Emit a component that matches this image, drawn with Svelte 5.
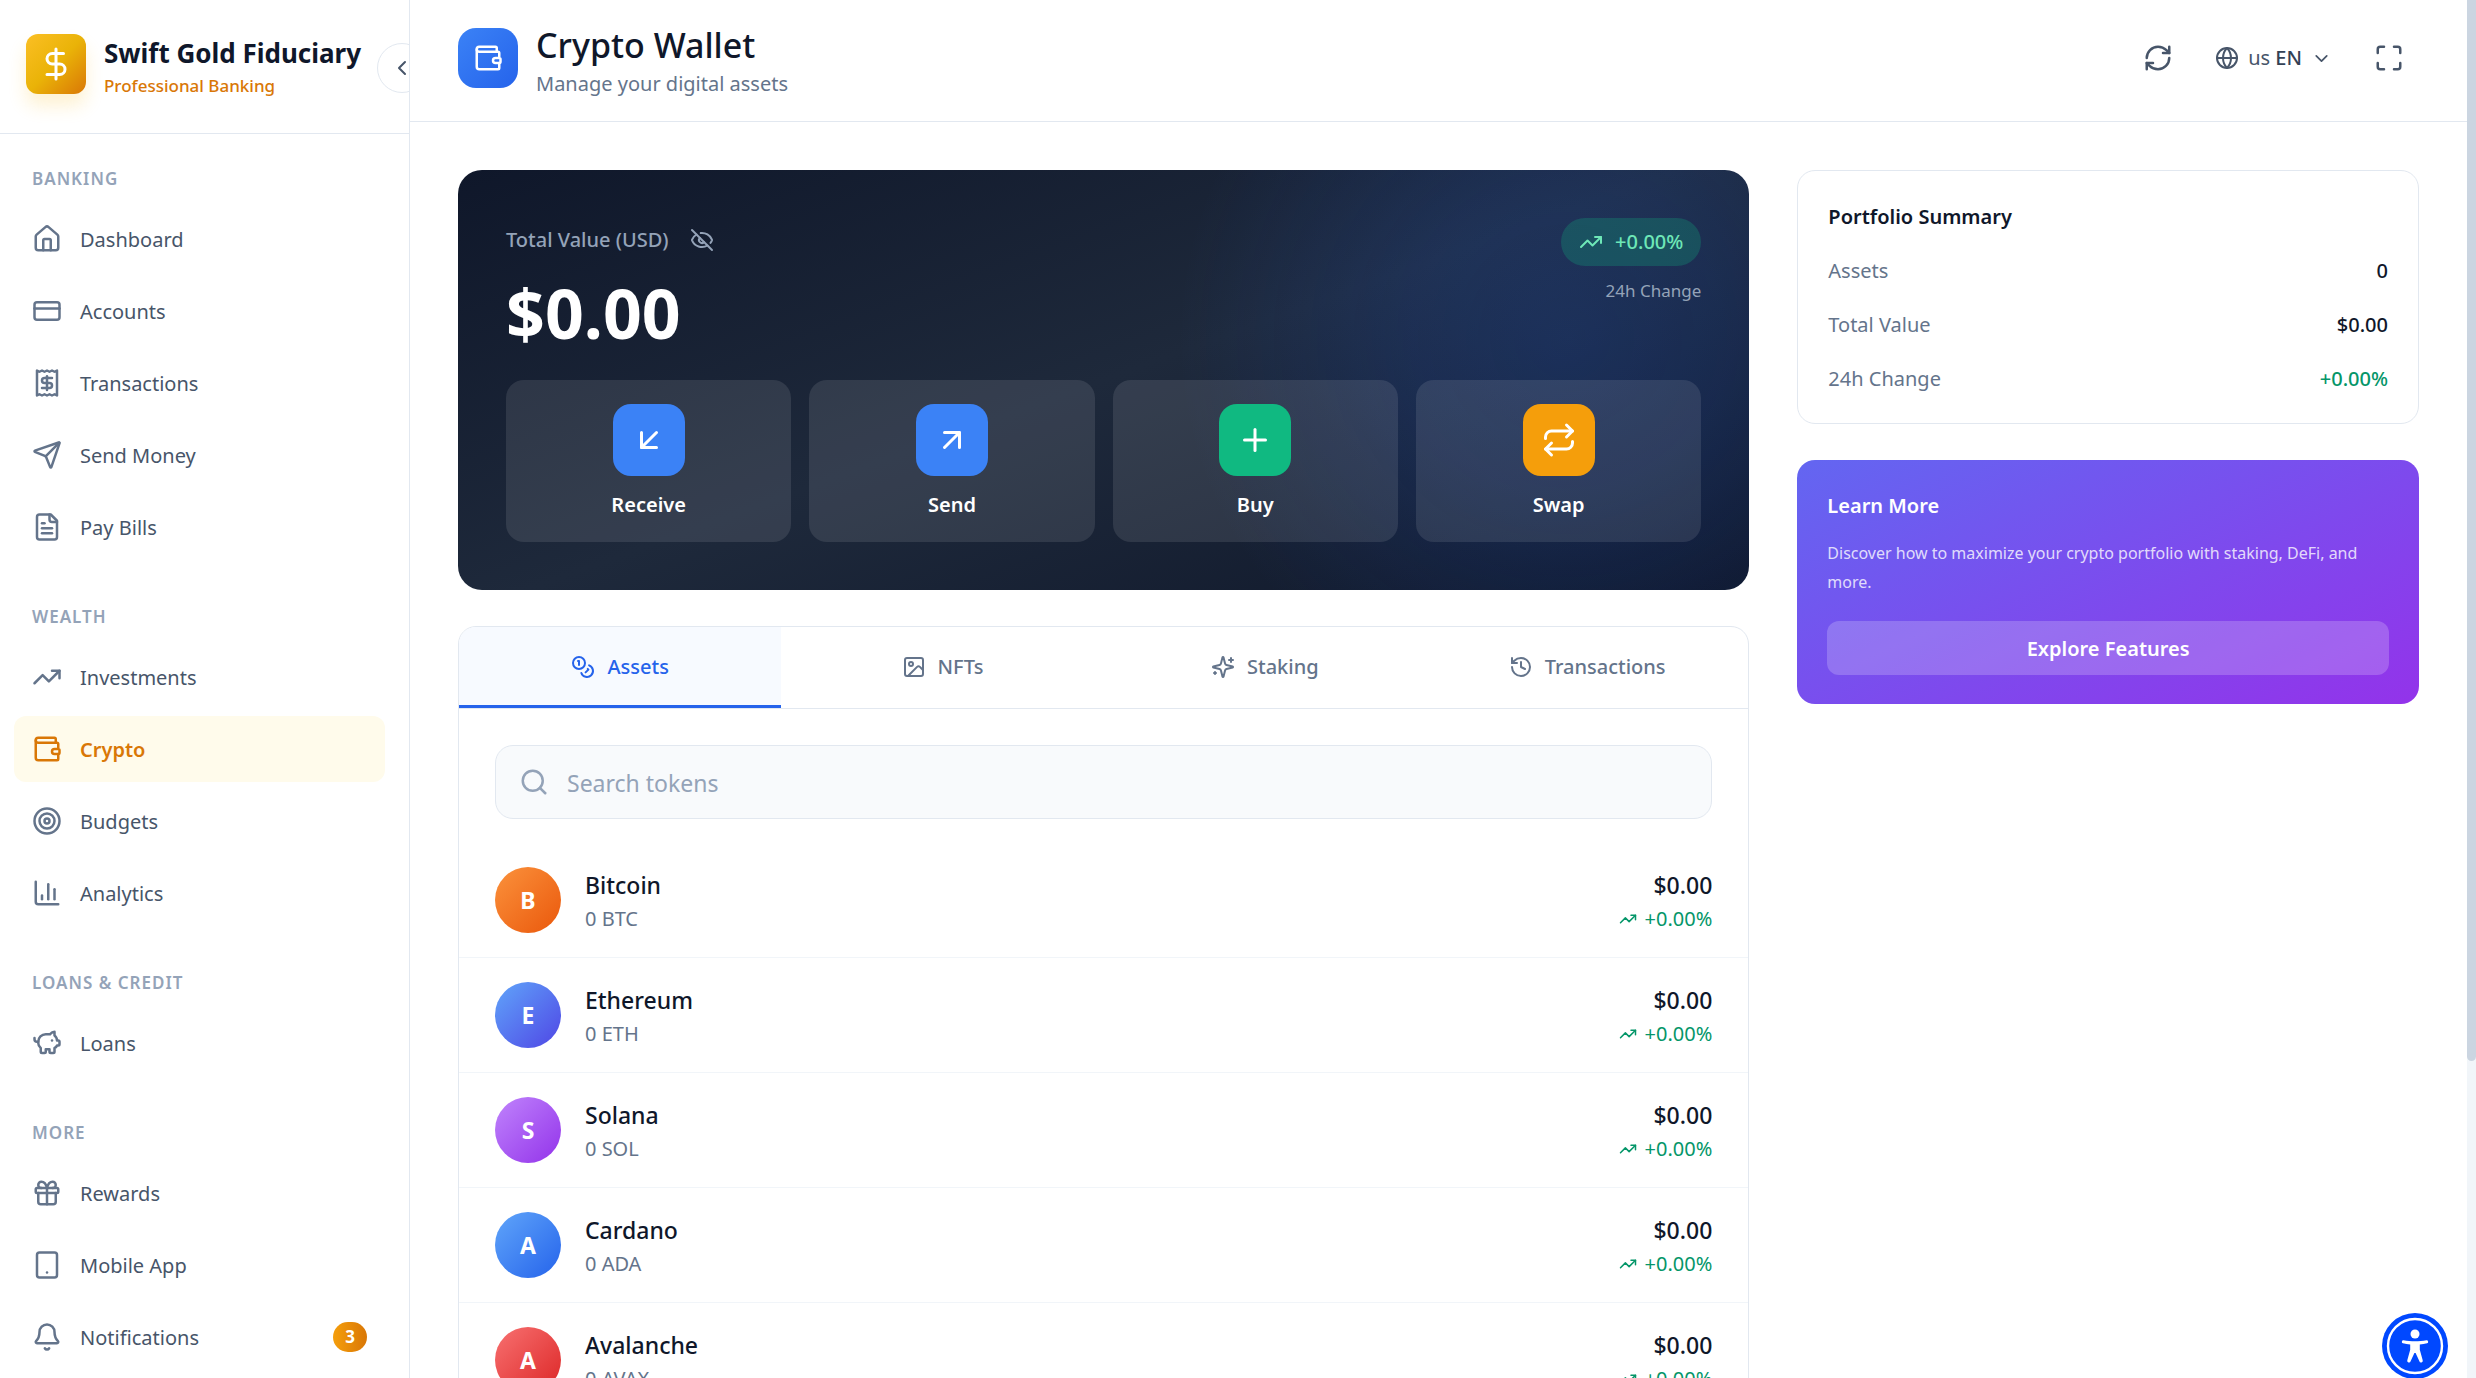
<script lang="ts">
    type Shape = { name: string; size?: number; stroke?: number };

    // 24x24 stroke icons
    const icons: Record<string, string[]> = {
        dollar: ["M12 2v20", "M17 5H9.5a3.5 3.5 0 0 0 0 7h5a3.5 3.5 0 0 1 0 7H6"],
        chevronLeft: ["m15 18-6-6 6-6"],
        chevronDown: ["m6 9 6 6 6-6"],
        house: [
            "M15 21v-8a1 1 0 0 0-1-1h-4a1 1 0 0 0-1 1v8",
            "M3 10a2 2 0 0 1 .709-1.528l7-5.999a2 2 0 0 1 2.582 0l7 5.999A2 2 0 0 1 21 10v9a2 2 0 0 1-2 2H5a2 2 0 0 1-2-2z"
        ],
        card: ["M4 5h16a2 2 0 0 1 2 2v10a2 2 0 0 1-2 2H4a2 2 0 0 1-2-2V7a2 2 0 0 1 2-2z", "M2 10h20"],
        receipt: [
            "M4 2v20l2-1 2 1 2-1 2 1 2-1 2 1 2-1 2 1V2l-2 1-2-1-2 1-2-1-2 1-2-1-2 1Z",
            "M16 8h-6a2 2 0 1 0 0 4h4a2 2 0 1 1 0 4H8",
            "M12 17.5v-11"
        ],
        send: [
            "M14.536 21.686a.5.5 0 0 0 .937-.024l6.5-19a.496.496 0 0 0-.635-.635l-19 6.5a.5.5 0 0 0-.024.937l7.93 3.18a2 2 0 0 1 1.112 1.11z",
            "m21.854 2.147-10.94 10.939"
        ],
        file: [
            "M15 2H6a2 2 0 0 0-2 2v16a2 2 0 0 0 2 2h12a2 2 0 0 0 2-2V7Z",
            "M14 2v4a2 2 0 0 0 2 2h4",
            "M10 9H8",
            "M16 13H8",
            "M16 17H8"
        ],
        trend: ["m22 7-8.5 8.5-5-5L2 17", "M16 7h6v6"],
        wallet: [
            "M19 7V4a1 1 0 0 0-1-1H5a2 2 0 0 0 0 4h15a1 1 0 0 1 1 1v4h-3a2 2 0 0 0 0 4h3a1 1 0 0 0 1-1v-2a1 1 0 0 0-1-1",
            "M3 5v14a2 2 0 0 0 2 2h15a1 1 0 0 0 1-1v-4"
        ],
        target: [
            "M2 12a10 10 0 1 0 20 0a10 10 0 1 0-20 0",
            "M6 12a6 6 0 1 0 12 0a6 6 0 1 0-12 0",
            "M10 12a2 2 0 1 0 4 0a2 2 0 1 0-4 0"
        ],
        chart: ["M3 3v16a2 2 0 0 0 2 2h16", "M18 17V9", "M13 17V5", "M8 17v-3"],
        piggy: [
            "M11 17h3v2a1 1 0 0 0 1 1h2a1 1 0 0 0 1-1v-3a3.16 3.16 0 0 0 2-2h1a1 1 0 0 0 1-1v-2a1 1 0 0 0-1-1h-1a5 5 0 0 0-2-4V3a4 4 0 0 0-3.2 1.6l-.3.4H11a6 6 0 0 0-6 6v1a5 5 0 0 0 2 4v3a1 1 0 0 0 1 1h2a1 1 0 0 0 1-1z",
            "M16 10h.01",
            "M2 8v1a2 2 0 0 0 2 2h1"
        ],
        gift: [
            "M4 8h16a1 1 0 0 1 1 1v2a1 1 0 0 1-1 1H4a1 1 0 0 1-1-1V9a1 1 0 0 1 1-1z",
            "M12 8v13",
            "M19 12v7a2 2 0 0 1-2 2H7a2 2 0 0 1-2-2v-7",
            "M7.5 8a2.5 2.5 0 0 1 0-5A4.8 8 0 0 1 12 8a4.8 8 0 0 1 4.5-5 2.5 2.5 0 0 1 0 5"
        ],
        tablet: ["M6 2h12a2 2 0 0 1 2 2v16a2 2 0 0 1-2 2H6a2 2 0 0 1-2-2V4a2 2 0 0 1 2-2z", "M12 18h.01"],
        bell: [
            "M10.268 21a2 2 0 0 0 3.464 0",
            "M3.262 15.326A1 1 0 0 0 4 17h16a1 1 0 0 0 .74-1.673C19.41 13.956 18 12.499 18 8A6 6 0 0 0 6 8c0 4.499-1.411 5.956-2.738 7.326"
        ],
        refresh: [
            "M3 12a9 9 0 0 1 9-9 9.75 9.75 0 0 1 6.74 2.74L21 8",
            "M21 3v5h-5",
            "M21 12a9 9 0 0 1-9 9 9.75 9.75 0 0 1-6.74-2.74L3 16",
            "M8 16H3v5"
        ],
        globe: [
            "M2 12a10 10 0 1 0 20 0a10 10 0 1 0-20 0",
            "M12 2a14.5 14.5 0 0 0 0 20 14.5 14.5 0 0 0 0-20",
            "M2 12h20"
        ],
        maximize: [
            "M8 3H5a2 2 0 0 0-2 2v3",
            "M21 8V5a2 2 0 0 0-2-2h-3",
            "M3 16v3a2 2 0 0 0 2 2h3",
            "M16 21h3a2 2 0 0 0 2-2v-3"
        ],
        eyeOff: [
            "M10.733 5.076a10.744 10.744 0 0 1 11.205 6.575 1 1 0 0 1 0 .696 10.747 10.747 0 0 1-1.444 2.49",
            "M14.084 14.158a3 3 0 0 1-4.242-4.242",
            "M17.479 17.499a10.75 10.75 0 0 1-15.417-5.151 1 1 0 0 1 0-.696 10.75 10.75 0 0 1 4.446-5.143",
            "m2 2 20 20"
        ],
        downLeft: ["M17 7 7 17", "M17 17H7V7"],
        upRight: ["M7 7h10v10", "M7 17 17 7"],
        plus: ["M5 12h14", "M12 5v14"],
        repeat: ["m17 2 4 4-4 4", "M3 11v-1a4 4 0 0 1 4-4h14", "m7 22-4-4 4-4", "M21 13v1a4 4 0 0 1-4 4H3"],
        coins: [
            "M2 8a6 6 0 1 0 12 0a6 6 0 1 0-12 0",
            "M18.09 10.37A6 6 0 1 1 10.34 18",
            "M7 6h1v4",
            "m16.71 13.88.7.71-2.82 2.82"
        ],
        image: [
            "M5 3h14a2 2 0 0 1 2 2v14a2 2 0 0 1-2 2H5a2 2 0 0 1-2-2V5a2 2 0 0 1 2-2z",
            "M7 9a2 2 0 1 0 4 0a2 2 0 1 0-4 0",
            "m21 15-3.086-3.086a2 2 0 0 0-2.828 0L6 21"
        ],
        sparkles: [
            "M9.937 15.5A2 2 0 0 0 8.5 14.063l-6.135-1.582a.5.5 0 0 1 0-.962L8.5 9.936A2 2 0 0 0 9.937 8.5l1.582-6.135a.5.5 0 0 1 .963 0L14.063 8.5A2 2 0 0 0 15.5 9.937l6.135 1.581a.5.5 0 0 1 0 .964L15.5 14.063a2 2 0 0 0-1.437 1.437l-1.582 6.135a.5.5 0 0 1-.963 0z",
            "M20 3v4",
            "M22 5h-4",
            "M4 17v2",
            "M5 18H3"
        ],
        history: ["M3 12a9 9 0 1 0 9-9 9.75 9.75 0 0 0-6.74 2.74L3 8", "M3 3v5h5", "M12 7v5l4 2"],
        search: ["M3 11a8 8 0 1 0 16 0a8 8 0 1 0-16 0", "m21 21-4.3-4.3"]
    };

    const sections = [
        {
            title: "Banking",
            items: [
                { label: "Dashboard", icon: "house" },
                { label: "Accounts", icon: "card" },
                { label: "Transactions", icon: "receipt" },
                { label: "Send Money", icon: "send" },
                { label: "Pay Bills", icon: "file" }
            ]
        },
        {
            title: "Wealth",
            items: [
                { label: "Investments", icon: "trend" },
                { label: "Crypto", icon: "wallet" },
                { label: "Budgets", icon: "target" },
                { label: "Analytics", icon: "chart" }
            ]
        },
        { title: "Loans & Credit", items: [{ label: "Loans", icon: "piggy" }] },
        {
            title: "More",
            items: [
                { label: "Rewards", icon: "gift" },
                { label: "Mobile App", icon: "tablet" },
                { label: "Notifications", icon: "bell", badge: 3 }
            ]
        }
    ];

    const actions = [
        { label: "Receive", icon: "downLeft", color: "blue" },
        { label: "Send", icon: "upRight", color: "blue" },
        { label: "Buy", icon: "plus", color: "green" },
        { label: "Swap", icon: "repeat", color: "amber" }
    ];

    const tabs = [
        { label: "Assets", icon: "coins" },
        { label: "NFTs", icon: "image" },
        { label: "Staking", icon: "sparkles" },
        { label: "Transactions", icon: "history" }
    ];

    const tokens = [
        { name: "Bitcoin", symbol: "BTC", tone: "orange" },
        { name: "Ethereum", symbol: "ETH", tone: "indigo" },
        { name: "Solana", symbol: "SOL", tone: "purple" },
        { name: "Cardano", symbol: "ADA", tone: "sky" },
        { name: "Avalanche", symbol: "AVAX", tone: "red" }
    ];

    let activePage = $state("Crypto");
    let activeTab = $state("Assets");
    let hidden = $state(false);
    let query = $state("");

    let visibleTokens = $derived(
        tokens.filter((t) => `${t.name} ${t.symbol}`.toLowerCase().includes(query.toLowerCase()))
    );
</script>

{#snippet icon({ name, size = 30, stroke = 2 }: Shape)}
    <svg
        width={size}
        height={size}
        viewBox="0 0 24 24"
        fill="none"
        stroke="currentColor"
        stroke-width={stroke}
        stroke-linecap="round"
        stroke-linejoin="round"
        aria-hidden="true"
    >
        {#each icons[name] as d}
            <path {d} />
        {/each}
    </svg>
{/snippet}

<div class="app">
    <aside class="sidebar">
        <div class="brand">
            <div class="brand-logo">{@render icon({ name: "dollar", size: 36 })}</div>
            <div>
                <div class="brand-name">Swift Gold Fiduciary</div>
                <div class="brand-sub">Professional Banking</div>
            </div>
            <button class="collapse" aria-label="Collapse sidebar">
                {@render icon({ name: "chevronLeft", size: 24 })}
            </button>
        </div>
        <nav>
            {#each sections as section}
                <section>
                    <h2>{section.title}</h2>
                    <ul>
                        {#each section.items as item}
                            <li>
                                <a
                                    href="#{item.icon}"
                                    class="nav-item"
                                    class:active={activePage === item.label}
                                    onclick={() => (activePage = item.label)}
                                >
                                    {@render icon({ name: item.icon })}
                                    <span class="nav-label">{item.label}</span>
                                    {#if item.badge}
                                        <span class="badge">{item.badge}</span>
                                    {/if}
                                </a>
                            </li>
                        {/each}
                    </ul>
                </section>
            {/each}
        </nav>
    </aside>

    <div class="page">
        <header class="topbar">
            <div class="page-icon">{@render icon({ name: "wallet" })}</div>
            <div class="page-title">
                <h1>Crypto Wallet</h1>
                <p>Manage your digital assets</p>
            </div>
            <div class="tools">
                <button class="tool" aria-label="Refresh">{@render icon({ name: "refresh" })}</button>
                <button class="tool lang">
                    {@render icon({ name: "globe", size: 24 })}
                    <span class="lang-name"><span class="flag">us</span> EN</span>
                    {@render icon({ name: "chevronDown", size: 21 })}
                </button>
                <button class="tool" aria-label="Fullscreen">{@render icon({ name: "maximize" })}</button>
            </div>
        </header>

        <main>
            <div class="primary">
                <section class="hero">
                    <div class="hero-top">
                        <div>
                            <div class="hero-label">
                                <span>Total Value (USD)</span>
                                <button aria-label="Toggle balance" onclick={() => (hidden = !hidden)}>
                                    {@render icon({ name: "eyeOff", size: 24 })}
                                </button>
                            </div>
                            <div class="balance">{hidden ? "••••••" : "$0.00"}</div>
                        </div>
                        <div class="hero-change">
                            <span class="pill">{@render icon({ name: "trend", size: 24 })} +0.00%</span>
                            <span class="period">24h Change</span>
                        </div>
                    </div>
                    <div class="actions">
                        {#each actions as action}
                            <button class="action">
                                <span class="action-icon {action.color}">
                                    {@render icon({ name: action.icon, size: 36 })}
                                </span>
                                {action.label}
                            </button>
                        {/each}
                    </div>
                </section>

                <section class="card assets">
                    <div class="tabs" role="tablist">
                        {#each tabs as tab}
                            <button
                                role="tab"
                                class="tab"
                                class:active={activeTab === tab.label}
                                aria-selected={activeTab === tab.label}
                                onclick={() => (activeTab = tab.label)}
                            >
                                {@render icon({ name: tab.icon, size: 24 })}
                                {tab.label}
                            </button>
                        {/each}
                    </div>
                    <label class="search">
                        {@render icon({ name: "search" })}
                        <input type="text" placeholder="Search tokens" aria-label="Search tokens" bind:value={query} />
                    </label>
                    <ul class="tokens">
                        {#each visibleTokens as token}
                            <li class="token">
                                <span class="avatar {token.tone}">{token.symbol[0]}</span>
                                <div>
                                    <div class="token-main">{token.name}</div>
                                    <div class="token-sub">0 {token.symbol}</div>
                                </div>
                                <div class="token-value">
                                    <div class="token-main">$0.00</div>
                                    <div class="token-sub up">{@render icon({ name: "trend", size: 18 })} +0.00%</div>
                                </div>
                            </li>
                        {/each}
                    </ul>
                </section>
            </div>

            <div class="secondary">
                <section class="card summary">
                    <h3>Portfolio Summary</h3>
                    <dl>
                        <div><dt>Assets</dt><dd>0</dd></div>
                        <div><dt>Total Value</dt><dd>$0.00</dd></div>
                        <div><dt>24h Change</dt><dd class="up">+0.00%</dd></div>
                    </dl>
                </section>
                <section class="learn">
                    <h3>Learn More</h3>
                    <p>Discover how to maximize your crypto portfolio with staking, DeFi, and more.</p>
                    <button>Explore Features</button>
                </section>
            </div>
        </main>
    </div>

    <div class="scroll-track"><div class="scroll-thumb"></div></div>

    <button class="a11y" aria-label="Accessibility options">
        <svg width="66" height="66" viewBox="0 0 66 66" aria-hidden="true">
            <circle cx="33" cy="33" r="33" fill="#0048ff" />
            <circle cx="33" cy="33" r="27" fill="none" stroke="#fff" stroke-width="2.4" />
            <circle cx="33" cy="21" r="4.5" fill="#fff" />
            <path
                d="M21.6 27.2c3.6.8 7.4 1.1 11.4 1.1s7.8-.3 11.4-1.1a1.6 1.6 0 0 1 .7 3.1c-2.4.6-4.8 1-7.3 1.2v5.2l2.9 10.5a1.7 1.7 0 0 1-3.3 1.1L33.6 40h-1.2l-3.8 8.3a1.7 1.7 0 0 1-3.3-1.1l2.9-10.5v-5.2c-2.5-.2-4.9-.6-7.3-1.2a1.6 1.6 0 0 1 .7-3.1z"
                fill="#fff"
            />
        </svg>
    </button>
</div>

<style>
    :global(body) {
        margin: 0;
        background: #fff;
        overflow: hidden;
    }
    .app {
        display: flex;
        height: 100vh;
        overflow: hidden;
        font-family: "Segoe UI", "Noto Sans", "Open Sans", sans-serif;
        font-size: 20px;
        line-height: 30px;
        color: #0f172a;
    }
    h1, h2, h3, p, ul, dl, dd {
        margin: 0;
        padding: 0;
    }
    ul {
        list-style: none;
    }
    button {
        font: inherit;
        color: inherit;
        border: none;
        background: none;
        padding: 0;
        cursor: pointer;
    }
    svg {
        flex: none;
        display: block;
    }

    /* sidebar */
    .sidebar {
        flex: none;
        width: 410px;
        box-sizing: border-box;
        border-right: 1px solid #e2e8f0;
        overflow: hidden;
    }
    .brand {
        position: relative;
        display: flex;
        align-items: flex-start;
        gap: 18px;
        height: 134px;
        padding: 34px 26px 0;
        box-sizing: border-box;
        border-bottom: 1px solid #e2e8f0;
        white-space: nowrap;
    }
    .brand-logo {
        flex: none;
        display: grid;
        place-items: center;
        width: 60px;
        height: 60px;
        border-radius: 12px;
        color: #fff;
        background: linear-gradient(135deg, #fbbf24, #eab308 50%, #d97706);
        box-shadow: 0 12px 18px rgba(251, 191, 36, 0.2);
    }
    .brand-name {
        font-size: 26px;
        line-height: 38px;
        font-weight: 700;
    }
    .brand-sub {
        font-size: 17px;
        line-height: 27px;
        font-weight: 500;
        color: #d97706;
    }
    .collapse {
        position: absolute;
        right: -18px;
        top: 43px;
        display: grid;
        place-items: center;
        width: 50px;
        height: 50px;
        border: 1px solid #e2e8f0;
        border-radius: 50%;
        background: #fff;
        color: #475569;
    }
    nav {
        padding: 33px 24px 0 14px;
    }
    section + section {
        margin-top: 45px;
    }
    h2 {
        padding: 0 18px 15px;
        font-size: 17px;
        line-height: 24px;
        font-weight: 600;
        letter-spacing: 1px;
        text-transform: uppercase;
        color: #94a3b8;
    }
    nav ul {
        display: grid;
        gap: 6px;
    }
    .nav-item {
        display: flex;
        align-items: center;
        gap: 18px;
        height: 66px;
        padding: 0 18px;
        border-radius: 12px;
        color: #475569;
        text-decoration: none;
    }
    .nav-item svg {
        color: #64748b;
    }
    .nav-item.active,
    .nav-item.active svg {
        color: #d97706;
    }
    .nav-item.active {
        background: #fffbeb;
        font-weight: 600;
    }
    .nav-label {
        padding-top: 2px;
    }
    .badge {
        margin-left: auto;
        min-width: 34px;
        border-radius: 15px;
        font-size: 17px;
        font-weight: 700;
        text-align: center;
        color: #fff;
        background: linear-gradient(90deg, #f59e0b, #d97706);
    }

    /* top bar */
    .page {
        flex: 1;
        min-width: 0;
    }
    .topbar {
        display: flex;
        align-items: flex-start;
        gap: 18px;
        height: 122px;
        padding: 28px 48px 0;
        box-sizing: border-box;
        border-bottom: 1px solid #e2e8f0;
    }
    .page-icon {
        display: grid;
        place-items: center;
        width: 60px;
        height: 60px;
        border-radius: 18px;
        color: #fff;
        background: linear-gradient(135deg, #3b82f6, #2563eb);
    }
    .page-title {
        margin-top: -6px;
    }
    h1 {
        font-size: 34px;
        line-height: 46px;
        font-weight: 500;
    }
    .page-title p {
        line-height: 32px;
        color: #64748b;
    }
    .tools {
        display: flex;
        align-items: center;
        gap: 12px;
        margin-left: auto;
        color: #475569;
    }
    .tool {
        display: flex;
        align-items: center;
        gap: 9px;
        padding: 15px;
    }
    .lang-name {
        font-weight: 500;
        color: #334155;
    }
    .flag {
        font-weight: 400;
        color: #475569;
    }

    /* content */
    main {
        display: grid;
        grid-template-columns: repeat(3, minmax(0, 1fr));
        gap: 48px;
        padding: 48px;
    }
    .primary {
        grid-column: span 2;
    }
    .primary section + section,
    .secondary section + section {
        margin-top: 36px;
    }
    .hero {
        padding: 48px;
        border-radius: 24px;
        color: #fff;
        background:
            radial-gradient(
                circle 390px at 86% 40%,
                rgba(37, 99, 235, 0.2),
                rgba(37, 99, 235, 0.15) 40%,
                transparent
            ),
            linear-gradient(160deg, #0f172a, #1e293b 50%, #0f172a);
    }
    .hero-top {
        display: flex;
        justify-content: space-between;
        height: 162px;
    }
    .hero-label {
        display: flex;
        align-items: center;
        gap: 21px;
        height: 44px;
        font-weight: 500;
        color: #94a3b8;
    }
    .balance {
        font-size: 68px;
        line-height: 102px;
        font-weight: 700;
    }
    .hero-change {
        display: flex;
        flex-direction: column;
        align-items: flex-end;
        gap: 10px;
    }
    .pill {
        display: flex;
        align-items: center;
        gap: 12px;
        height: 48px;
        padding: 0 18px;
        border-radius: 24px;
        font-weight: 500;
        color: #6ee7b7;
        background: rgba(16, 185, 129, 0.25);
    }
    .period {
        font-size: 17px;
        color: #94a3b8;
    }
    .actions {
        display: grid;
        grid-template-columns: repeat(4, 1fr);
        gap: 18px;
    }
    .action {
        display: flex;
        flex-direction: column;
        align-items: center;
        gap: 14px;
        padding: 24px 24px 22px;
        border-radius: 18px;
        font-weight: 600;
        background: rgba(255, 255, 255, 0.1);
    }
    .action-icon {
        display: grid;
        place-items: center;
        width: 72px;
        height: 72px;
        border-radius: 18px;
    }
    .action-icon.blue {
        background: #3b82f6;
    }
    .action-icon.green {
        background: #10b981;
    }
    .action-icon.amber {
        background: #f59e0b;
    }
    .card {
        border: 1px solid #e2e8f0;
        border-radius: 18px;
        background: #fff;
    }
    .assets {
        overflow: hidden;
    }
    .tabs {
        display: grid;
        grid-template-columns: repeat(4, 1fr);
        border-bottom: 1px solid #e2e8f0;
    }
    .tab {
        display: flex;
        align-items: center;
        justify-content: center;
        gap: 12px;
        height: 81px;
        padding-top: 2px;
        border-bottom: 3px solid transparent;
        font-weight: 500;
        color: #64748b;
    }
    .tab.active {
        color: #2563eb;
        border-bottom-color: #2563eb;
        background: #f7faff;
    }
    .search {
        display: flex;
        align-items: center;
        gap: 18px;
        height: 72px;
        margin: 36px 36px 24px;
        padding: 0 23px;
        border: 1px solid #e2e8f0;
        border-radius: 18px;
        background: #f8fafc;
        color: #94a3b8;
    }
    .search input {
        flex: 1;
        padding: 2px 0 0;
        border: none;
        outline: none;
        background: none;
        font: inherit;
        font-size: 23px;
        color: #0f172a;
    }
    .search input::placeholder {
        color: #94a3b8;
    }
    .token {
        display: flex;
        align-items: center;
        gap: 24px;
        padding: 24px 36px;
        border-bottom: 1px solid #f1f5f9;
    }
    .avatar {
        display: grid;
        place-items: center;
        width: 66px;
        height: 66px;
        border-radius: 50%;
        font-size: 23px;
        font-weight: 700;
        color: #fff;
    }
    .avatar.orange {
        background: linear-gradient(135deg, #fb923c, #ea580c);
    }
    .avatar.indigo {
        background: linear-gradient(135deg, #60a5fa, #4f46e5);
    }
    .avatar.purple {
        background: linear-gradient(135deg, #c084fc, #9333ea);
    }
    .avatar.sky {
        background: linear-gradient(135deg, #60a5fa, #2563eb);
    }
    .avatar.red {
        background: linear-gradient(135deg, #f87171, #dc2626);
    }
    .token-main {
        font-size: 23px;
        line-height: 37px;
        font-weight: 500;
    }
    .token-sub {
        display: flex;
        align-items: center;
        gap: 8px;
        line-height: 29px;
        color: #64748b;
    }
    .token-value {
        margin-left: auto;
        text-align: right;
    }
    .up,
    dd.up {
        color: #059669;
    }
    .summary,
    .learn {
        padding: 31px 30px 29px;
    }
    h3 {
        font-size: 20px;
        font-weight: 600;
    }
    dl div {
        display: flex;
        justify-content: space-between;
        margin-top: 24px;
    }
    dt {
        color: #64748b;
    }
    dd {
        font-weight: 500;
    }
    .learn {
        border-radius: 18px;
        color: #fff;
        background: linear-gradient(155deg, #6366f1, #9333ea);
    }
    .learn p {
        margin: 18px 0 24px;
        font-size: 16px;
        line-height: 29px;
        color: rgba(255, 255, 255, 0.8);
    }
    .learn button {
        width: 100%;
        height: 54px;
        padding-top: 2px;
        border-radius: 12px;
        font-weight: 600;
        background: rgba(255, 255, 255, 0.2);
    }

    .scroll-track {
        flex: none;
        width: 9px;
        background: #f1f5f9;
    }
    .scroll-thumb {
        height: 77%;
        border-radius: 0 0 5px 5px;
        background: #cbd5e1;
    }
    .a11y {
        position: fixed;
        right: 28px;
        bottom: -1px;
    }
</style>
